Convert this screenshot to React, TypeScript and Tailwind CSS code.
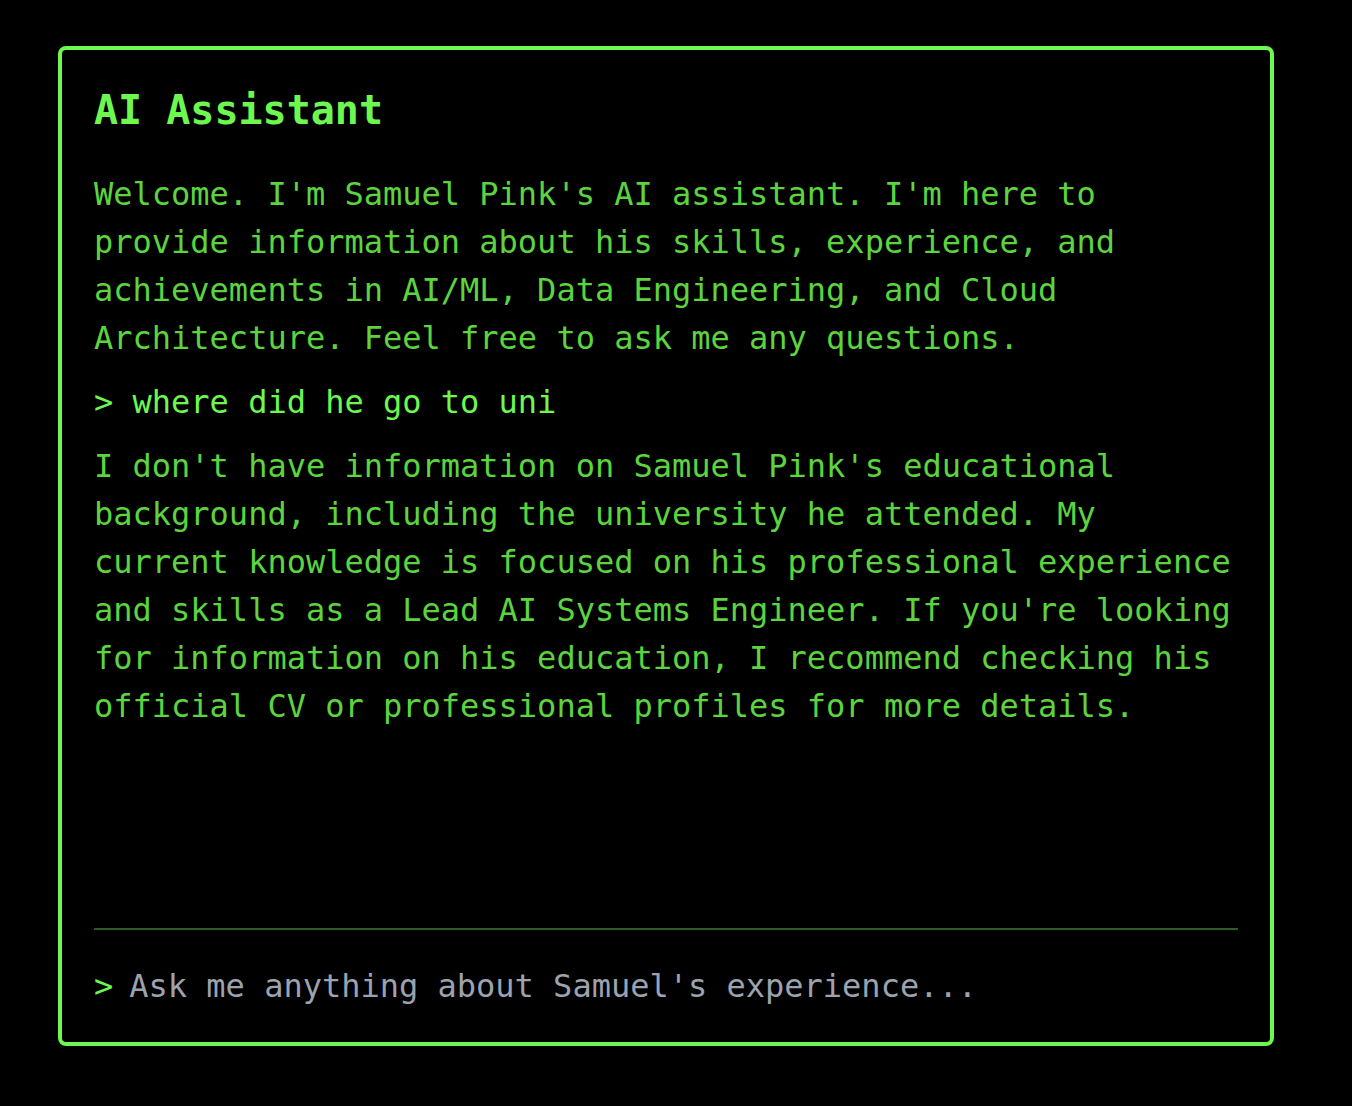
import React from "react";

export default function App() {
  const mono = { fontFamily: '"DejaVu Sans Mono", "Liberation Mono", monospace' };
  return (
    <div className="min-h-[1106px] w-full bg-black pt-[46px]" style={mono}>
      <div className="ml-[58px] flex h-[1000px] w-[1216px] flex-col rounded-[8px] border-[4px] border-[#6cf84f] p-[32px]">
        <h1 className="mb-[32px] text-[40px] font-bold leading-[56px] text-[#6cf84f]">AI Assistant</h1>
        <div className="flex flex-1 flex-col gap-[16px] overflow-hidden pb-[32px] text-[32px] leading-[48px]">
          <p className="text-[#5bd43e]">
            Welcome. I'm Samuel Pink's AI assistant. I'm here to provide information about his skills, experience, and achievements in AI/ML, Data Engineering, and Cloud Architecture. Feel free to ask me any questions.
          </p>
          <p className="text-[#6cf84f]">&gt; where did he go to uni</p>
          <p className="text-[#5bd43e]">
            I don't have information on Samuel Pink's educational background, including the university he attended. My current knowledge is focused on his professional experience and skills as a Lead AI Systems Engineer. If you're looking for information on his education, I recommend checking his official CV or professional profiles for more details.
          </p>
        </div>
        <div className="flex items-center gap-[16px] border-t-[2px] border-[#2c5a22] pt-[32px] text-[32px] leading-[48px]">
          <span className="text-[#6cf84f]">&gt;</span>
          <input
            className="flex-1 bg-transparent text-[32px] leading-[48px] text-[#6cf84f] outline-none placeholder:text-[#9ca3af]"
            style={mono}
            placeholder="Ask me anything about Samuel's experience..."
          />
        </div>
      </div>
    </div>
  );
}
